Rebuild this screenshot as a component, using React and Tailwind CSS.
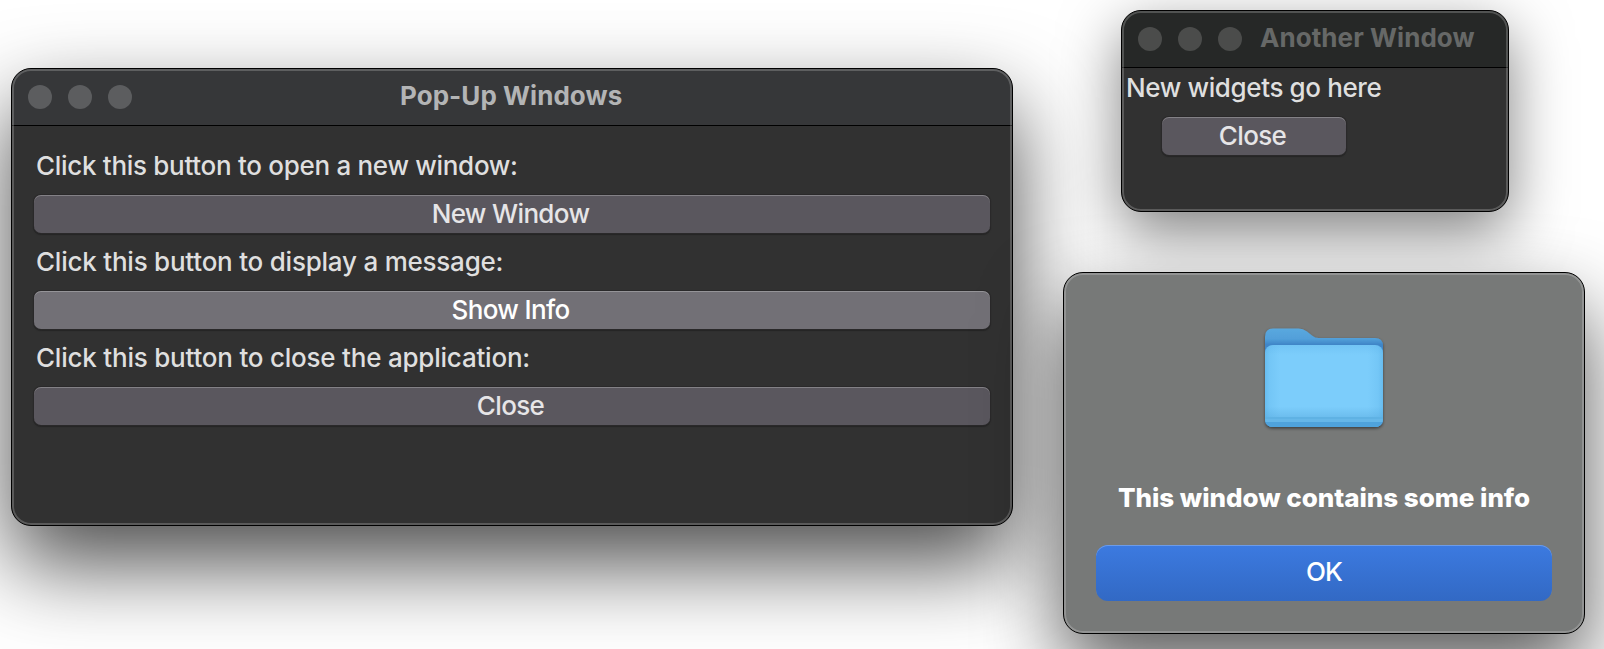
import React from "react";

const shell =
  "absolute flex flex-col overflow-hidden rounded-[20px] border border-black";

function Lights({ className }) {
  return (
    <div className="flex gap-4">
      {[0, 1, 2].map((i) => (
        <span key={i} className={`size-6 rounded-full ${className}`} />
      ))}
    </div>
  );
}

function Rim({ className }) {
  return (
    <div
      className={`pointer-events-none absolute inset-0 rounded-[19px] border-2 ${className}`}
    />
  );
}

function PushButton({ children, className = "" }) {
  return (
    <button
      className={`flex h-[38px] shrink-0 items-center justify-center rounded-[7px] pr-[3px] text-[26px] leading-none font-medium tracking-[-0.65px] shadow-[inset_0_1px_0_rgba(255,255,255,0.25),0_0_0_1px_#2a292a,0_1px_1px_1px_#252525] ${className}`}
    >
      {children}
    </button>
  );
}

function Label({ children, className = "" }) {
  return (
    <p
      className={`flex items-center text-[26px] leading-none font-medium whitespace-nowrap text-[#dfdfdf] ${className}`}
    >
      {children}
    </p>
  );
}

function FolderIcon() {
  return (
    <svg width="120" height="102" viewBox="0 0 120 102" className="overflow-visible">
      <defs>
        <linearGradient id="back" x1="0" y1="0" x2="0" y2="22" gradientUnits="userSpaceOnUse">
          <stop offset="0" stopColor="#5aa9df" />
          <stop offset="0.5" stopColor="#529fd9" />
          <stop offset="0.75" stopColor="#3f86c8" />
          <stop offset="1" stopColor="#3f86c8" />
        </linearGradient>
        <linearGradient id="front" x1="0" y1="17" x2="0" y2="99" gradientUnits="userSpaceOnUse">
          <stop offset="0" stopColor="#72c4f5" />
          <stop offset="0.12" stopColor="#7ccdfb" />
          <stop offset="0.75" stopColor="#7ccdfb" />
          <stop offset="0.88" stopColor="#6cbdee" />
          <stop offset="1" stopColor="#62b4e6" />
        </linearGradient>
        <linearGradient id="sides" x1="0" y1="0" x2="1" y2="0">
          <stop offset="0" stopColor="#4ea7e0" stopOpacity="0.45" />
          <stop offset="0.04" stopColor="#4ea7e0" stopOpacity="0.18" />
          <stop offset="0.13" stopColor="#4ea7e0" stopOpacity="0" />
          <stop offset="0.87" stopColor="#4ea7e0" stopOpacity="0" />
          <stop offset="0.96" stopColor="#4ea7e0" stopOpacity="0.18" />
          <stop offset="1" stopColor="#4ea7e0" stopOpacity="0.45" />
        </linearGradient>
        <clipPath id="face">
          <rect x="1" y="17" width="118" height="82" rx="8" />
        </clipPath>
        <filter id="drop" x="-10%" y="-10%" width="120%" height="125%">
          <feDropShadow dx="0" dy="1.5" stdDeviation="1.5" floodColor="#000" floodOpacity="0.5" />
        </filter>
      </defs>
      <g filter="url(#drop)">
        <path
          d="M1 9Q1 0.500 9 0.500H34.500Q39 0.500 43 3.500L48 7.500Q51 10 54.500 10H111Q119 10 119 18V91Q119 99 111 99H9Q1 99 1 91Z"
          fill="url(#back)"
        />
      </g>
      <g clipPath="url(#face)">
        <rect x="1" y="17" width="118" height="82" fill="url(#front)" />
        <rect x="1" y="17" width="118" height="82" fill="url(#sides)" />
        <rect x="1" y="89" width="118" height="2" fill="#5fb2e4" />
        <rect x="1" y="91" width="118" height="3" fill="#66b7e8" />
        <rect x="1" y="94" width="118" height="5" fill="#4fa3dc" />
      </g>
    </svg>
  );
}

export default function App() {
  return (
    <main className="relative h-[649px] w-[1604px] overflow-hidden bg-white font-['Inter',sans-serif]">
      <section
        className={`${shell} top-[10px] left-[1121px] h-[202px] w-[388px] bg-[#313131] shadow-[0_20px_60px_rgba(0,0,0,0.5)]`}
      >
        <header className="flex h-[57px] shrink-0 items-center border-b border-black bg-[#262827] pl-4">
          <Lights className="bg-[#4b4c4b]" />
          <h1 className="ml-[18px] pb-0.5 text-[26px] leading-none font-bold tracking-[0.06px] whitespace-nowrap text-[#666867]">
            Another Window
          </h1>
        </header>
        <Label className="h-[42px] pb-0.5 pl-1 tracking-[-0.38px]">New widgets go here</Label>
        <PushButton className="mt-[7px] ml-10 w-[184px] bg-[#5a575e] text-[#e6e5e7]">
          Close
        </PushButton>
        <Rim className="border-white/20" />
      </section>

      <section
        className={`${shell} top-[68px] left-[11px] h-[458px] w-[1002px] bg-[#313131] shadow-[0_38px_86px_rgba(0,0,0,0.7)]`}
      >
        <header className="flex h-[57px] shrink-0 items-center border-b border-black bg-[#363739] pl-4">
          <Lights className="bg-[#5c5d5f]" />
          <h1 className="ml-[268px] pb-0.5 text-[26px] leading-none font-bold tracking-[0.05px] whitespace-nowrap text-[#b3b4b5]">
            Pop-Up Windows
          </h1>
        </header>
        <div className="mt-[11px] flex flex-col px-[22px]">
          <Label className="h-[58px] pl-0.5 tracking-[-0.3px]">
            Click this button to open a new window:
          </Label>
          <PushButton className="bg-[#5a575e] text-[#e6e5e7]">New Window</PushButton>
          <Label className="h-[58px] pl-0.5 tracking-[-0.23px]">
            Click this button to display a message:
          </Label>
          <PushButton className="bg-[#727076] text-white">Show Info</PushButton>
          <Label className="h-[58px] pl-0.5 tracking-[-0.22px]">
            Click this button to close the application:
          </Label>
          <PushButton className="bg-[#5a575e] text-[#e6e5e7]">Close</PushButton>
        </div>
        <Rim className="border-white/20" />
      </section>

      <section
        className={`${shell} top-[272px] left-[1063px] h-[362px] w-[522px] items-center bg-[#777978] shadow-[0_36px_80px_rgba(0,0,0,0.65)]`}
      >
        <div className="mt-[55px] flex">
          <FolderIcon />
        </div>
        <h2 className="mt-[55px] text-[26px] leading-[26px] font-extrabold tracking-[-0.04px] whitespace-nowrap text-white">
          This window contains some info
        </h2>
        <button className="mt-[34px] flex h-14 w-[456px] items-center justify-center rounded-xl bg-linear-to-b from-[#3c7ae0] to-[#3269c4] pb-0.5 text-[26px] leading-none font-medium tracking-[-0.9px] text-white shadow-[inset_0_1px_0_#6c9be8]">
          OK
        </button>
        <Rim className="border-white/20" />
      </section>
    </main>
  );
}
